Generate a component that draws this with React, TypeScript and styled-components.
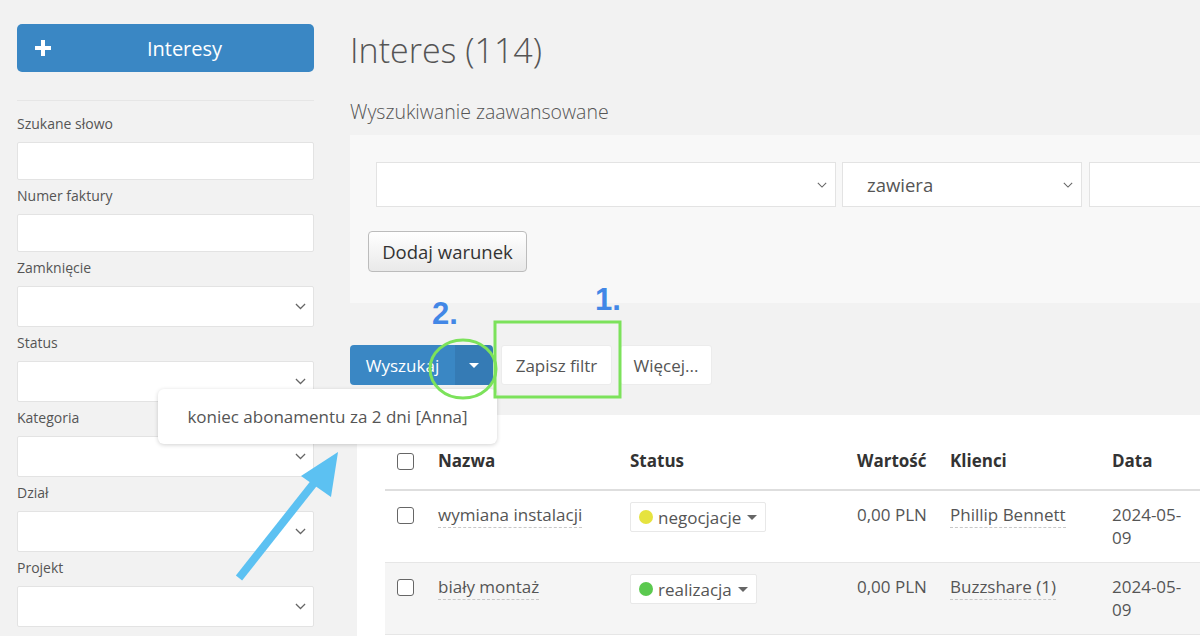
import React from 'react'
import styled, { createGlobalStyle } from 'styled-components'

const GlobalStyle = createGlobalStyle`
  html, body {
    margin: 0;
    padding: 0;
    background: #f2f2f2;
    font-family: 'Open Sans', 'Liberation Sans', sans-serif;
    color: #555;
    overflow: hidden;
  }
  * { box-sizing: border-box; }
`

type Field = { label: string; select?: boolean }

const sidebarFields: Field[] = [
  { label: 'Szukane słowo' },
  { label: 'Numer faktury' },
  { label: 'Zamknięcie', select: true },
  { label: 'Status', select: true },
  { label: 'Kategoria', select: true },
  { label: 'Dział', select: true },
  { label: 'Projekt', select: true },
]

type Row = {
  name: string
  status: string
  dot: string
  value: string
  client: string
  date: string
}

const rows: Row[] = [
  {
    name: 'wymiana instalacji',
    status: 'negocjacje',
    dot: '#e6e33f',
    value: '0,00 PLN',
    client: 'Phillip Bennett',
    date: '2024-05-09',
  },
  {
    name: 'biały montaż',
    status: 'realizacja',
    dot: '#5bc94f',
    value: '0,00 PLN',
    client: 'Buzzshare (1)',
    date: '2024-05-09',
  },
]

const Chevron = ({ size = 11 }: { size?: number }) => (
  <svg width={size} height={size / 2 + 1} viewBox="0 0 12 7" fill="none">
    <polyline points="1,1 6,6 11,1" stroke="#666" strokeWidth="1.3" />
  </svg>
)

export default function App() {
  return (
    <>
      <GlobalStyle />
      <Page>
        <Sidebar>
          <AddButton type="button">
            <PlusIcon width="16" height="16" viewBox="0 0 16 16">
              <rect x="6" y="0" width="4" height="16" fill="#fff" />
              <rect x="0" y="6" width="16" height="4" fill="#fff" />
            </PlusIcon>
            Interesy
          </AddButton>
          <Divider />
          {sidebarFields.map((f) => (
            <FieldBox key={f.label}>
              <FieldLabel>{f.label}</FieldLabel>
              <Control select={f.select}>
                {f.select && <Chevron />}
              </Control>
            </FieldBox>
          ))}
        </Sidebar>

        <Main>
          <Title>Interes (114)</Title>
          <Subtitle>Wyszukiwanie zaawansowane</Subtitle>

          <SearchPanel>
            <ConditionRow>
              <CondSelect width={460}>
                <span />
                <Chevron size={10} />
              </CondSelect>
              <CondSelect width={240}>
                <span>zawiera</span>
                <Chevron size={10} />
              </CondSelect>
              <CondInput />
            </ConditionRow>
            <GreyButton type="button">Dodaj warunek</GreyButton>
          </SearchPanel>

          <ActionRow>
            <SplitButton>
              <SplitMain type="button">Wyszukaj</SplitMain>
              <SplitToggle type="button">
                <Caret color="#fff" />
              </SplitToggle>
            </SplitButton>
            <WhiteButton type="button" width={111}>
              Zapisz filtr
            </WhiteButton>
            <WhiteButton type="button" width={92}>
              Więcej...
            </WhiteButton>
          </ActionRow>

          <TableCard>
            <Table>
              <colgroup>
                <col style={{ width: 53 }} />
                <col style={{ width: 192 }} />
                <col style={{ width: 227 }} />
                <col style={{ width: 93 }} />
                <col style={{ width: 162 }} />
                <col style={{ width: 80 }} />
                <col style={{ width: 60 }} />
              </colgroup>
              <thead>
                <tr>
                  <HeadCell>
                    <CheckBox />
                  </HeadCell>
                  <HeadCell>Nazwa</HeadCell>
                  <HeadCell>Status</HeadCell>
                  <HeadCell>Wartość</HeadCell>
                  <HeadCell>Klienci</HeadCell>
                  <HeadCell>Data</HeadCell>
                  <HeadCell />
                </tr>
              </thead>
              <tbody>
                {rows.map((r, i) => (
                  <BodyRow key={r.name} striped={i % 2 === 1}>
                    <Cell>
                      <CheckBox />
                    </Cell>
                    <Cell>
                      <DashedLink>{r.name}</DashedLink>
                    </Cell>
                    <Cell>
                      <StatusPill>
                        <Dot color={r.dot} />
                        {r.status}
                        <Caret color="#666" />
                      </StatusPill>
                    </Cell>
                    <Cell>{r.value}</Cell>
                    <Cell>
                      <DashedLink>{r.client}</DashedLink>
                    </Cell>
                    <Cell>{r.date}</Cell>
                    <Cell />
                  </BodyRow>
                ))}
              </tbody>
            </Table>
          </TableCard>
        </Main>

        <DropdownMenu>koniec abonamentu za 2 dni [Anna]</DropdownMenu>

        <Markup width="1200" height="636" viewBox="0 0 1200 636">
          <rect x="495" y="322" width="125" height="75" fill="none" stroke="#7ce25b" strokeWidth="3" />
          <ellipse cx="463" cy="369" rx="33" ry="29" fill="none" stroke="#7ce25b" strokeWidth="3" />
          <line x1="239" y1="578" x2="318" y2="478" stroke="#5cc1f2" strokeWidth="8" />
          <polygon points="338,452 301,476 331,497" fill="#5cc1f2" />
        </Markup>
        <StepNumber style={{ left: 432, top: 296 }}>2.</StepNumber>
        <StepNumber style={{ left: 595, top: 282 }}>1.</StepNumber>
      </Page>
    </>
  )
}

const Page = styled.div`
  position: relative;
  display: flex;
  width: 1200px;
  height: 636px;
  overflow: hidden;
`

const Sidebar = styled.aside`
  flex: 0 0 297px;
  margin-left: 17px;
  padding-top: 24px;
`

const AddButton = styled.button`
  position: relative;
  display: flex;
  align-items: center;
  justify-content: center;
  width: 100%;
  height: 48px;
  padding-left: 44px;
  border: 0;
  border-radius: 5px;
  background: #3a87c4;
  color: #fff;
  font-family: inherit;
  font-size: 20px;
`

const PlusIcon = styled.svg`
  position: absolute;
  left: 18px;
  top: 16px;
`

const Divider = styled.hr`
  margin: 28px 0 0;
  border: 0;
  border-top: 1px solid #e6e6e6;
`

const FieldBox = styled.div`
  margin-top: 13px;
  & + & {
    margin-top: 6px;
  }
`

const FieldLabel = styled.div`
  font-size: 14px;
  line-height: 20px;
  color: #555;
  margin-bottom: 8px;
`

const Control = styled.div<{ select?: boolean }>`
  display: flex;
  align-items: center;
  justify-content: flex-end;
  height: ${({ select }) => (select ? 41 : 38)}px;
  padding-right: 7px;
  background: #fff;
  border: 1px solid #e3e3e3;
  border-radius: 2px;
`

const Main = styled.main`
  flex: 1;
  min-width: 0;
  margin-left: 36px;
  padding-top: 27px;
`

const Title = styled.h1`
  margin: 0;
  font-size: 34px;
  font-weight: 300;
  line-height: 46px;
  color: #555;
`

const Subtitle = styled.h2`
  margin: 27px 0 0;
  font-size: 19.5px;
  font-weight: 300;
  line-height: 24px;
  color: #555;
`

const SearchPanel = styled.section`
  margin-top: 11px;
  width: 1000px;
  height: 168px;
  padding: 27px 0 0 18px;
  background: #f8f8f8;
`

const ConditionRow = styled.div`
  display: flex;
  gap: 6px;
  margin-left: 8px;
`

const CondSelect = styled.div<{ width: number }>`
  display: flex;
  align-items: center;
  justify-content: space-between;
  width: ${({ width }) => width}px;
  height: 45px;
  padding: 0 8px 0 24px;
  background: #fff;
  border: 1px solid #e3e3e3;
  font-size: 18.5px;
  color: #555;
`

const CondInput = styled.div`
  width: 200px;
  height: 45px;
  margin-left: 1px;
  background: #fff;
  border: 1px solid #e3e3e3;
`

const GreyButton = styled.button`
  margin-top: 24px;
  width: 159px;
  height: 41px;
  border: 1px solid #bcbcbc;
  border-radius: 4px;
  background: linear-gradient(#ffffff, #e9e9e9);
  color: #333;
  font-family: inherit;
  font-size: 18.5px;
`

const ActionRow = styled.div`
  display: flex;
  gap: 8px;
  margin-top: 42px;
  height: 40px;
`

const SplitButton = styled.div`
  display: flex;
  border-radius: 4px;
  overflow: hidden;
`

const SplitMain = styled.button`
  width: 105px;
  border: 0;
  background: #3a87c4;
  color: #fff;
  font-family: inherit;
  font-size: 17px;
`

const SplitToggle = styled.button`
  display: flex;
  align-items: center;
  justify-content: center;
  width: 38px;
  border: 0;
  background: #357bb5;
`

const Caret = styled.span<{ color: string }>`
  display: inline-block;
  width: 0;
  height: 0;
  border-left: 5px solid transparent;
  border-right: 5px solid transparent;
  border-top: 5px solid ${({ color }) => color};
`

const WhiteButton = styled.button<{ width: number }>`
  width: ${({ width }) => width}px;
  border: 1px solid #ececec;
  border-radius: 3px;
  background: #fff;
  color: #555;
  font-family: inherit;
  font-size: 17px;
`

const TableCard = styled.section`
  margin: 30px 0 0 7px;
  padding: 24px 0 0 28px;
  height: 300px;
  background: #fff;
`

const Table = styled.table`
  table-layout: fixed;
  width: 867px;
  border-collapse: collapse;
`

const HeadCell = styled.th`
  padding: 10px 0 16px;
  border-bottom: 2px solid #dedede;
  text-align: left;
  font-size: 17px;
  font-weight: 700;
  line-height: 24px;
  color: #333;
  vertical-align: middle;

  &:first-child {
    padding-left: 12px;
  }
`

const BodyRow = styled.tr<{ striped?: boolean }>`
  background: ${({ striped }) => (striped ? '#f5f5f5' : '#fff')};
  border-bottom: 1px solid #e6e6e6;
`

const Cell = styled.td`
  padding: 12px 0 13px;
  font-size: 17px;
  line-height: 23px;
  color: #555;
  vertical-align: top;

  &:first-child {
    padding-left: 12px;
    padding-top: 16px;
  }
`

const CheckBox = styled.span`
  display: block;
  width: 17px;
  height: 17px;
  border: 1.5px solid #666;
  border-radius: 3px;
  background: #fff;
`

const DashedLink = styled.span`
  border-bottom: 1px dashed #c8c8c8;
  padding-bottom: 1px;
`

const StatusPill = styled.span`
  display: inline-flex;
  align-items: center;
  gap: 5px;
  height: 30px;
  margin-top: -1px;
  padding: 0 8px 0 8px;
  background: #fff;
  border: 1px solid #e8e8e8;
  border-radius: 2px;

  ${Caret} {
    margin-left: 1px;
  }
`

const Dot = styled.span<{ color: string }>`
  width: 14px;
  height: 14px;
  border-radius: 50%;
  background: ${({ color }) => color};
`

const DropdownMenu = styled.div`
  position: absolute;
  left: 158px;
  top: 389px;
  width: 339px;
  height: 55px;
  display: flex;
  align-items: center;
  justify-content: center;
  background: #fff;
  border-radius: 6px;
  box-shadow: 0 1px 4px rgba(0, 0, 0, 0.18);
  font-size: 17px;
  color: #555;
`

const Markup = styled.svg`
  position: absolute;
  left: 0;
  top: 0;
  pointer-events: none;
`

const StepNumber = styled.div`
  position: absolute;
  font-family: 'Liberation Sans', Arial, sans-serif;
  font-weight: 700;
  font-size: 31px;
  line-height: 36px;
  color: #4287e6;
`
